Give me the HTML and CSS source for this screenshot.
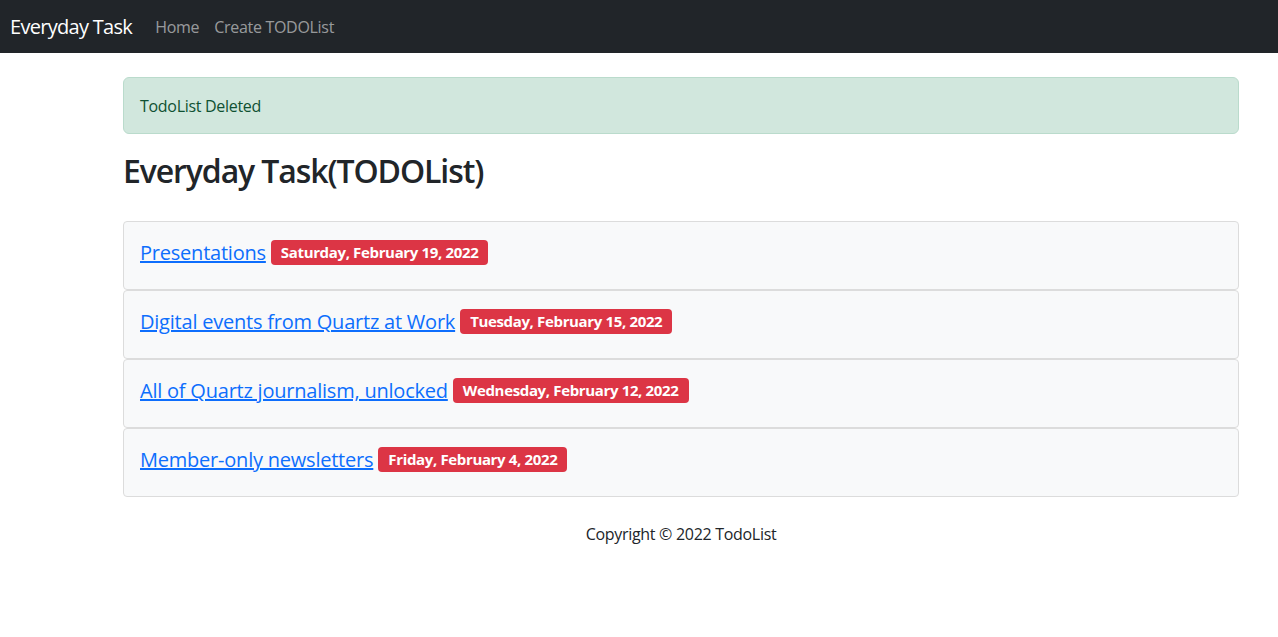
FILE: index.html
```html
<!DOCTYPE html>
<html lang="en">
<head>
<meta charset="utf-8">
<title>Everyday Task</title>
<link rel="stylesheet" href="styles.css">
</head>
<body>
<nav class="navbar">
  <a class="brand" href="#">Everyday Task</a>
  <ul class="nav-links">
    <li><a href="#">Home</a></li>
    <li><a href="#">Create TODOList</a></li>
  </ul>
</nav>
<main class="container">
  <div class="alert">TodoList Deleted</div>
  <h2 class="title">Everyday Task(TODOList)</h2>
  <ul class="todo-list">
    <li class="todo-item"><a href="#">Presentations</a> <span class="badge">Saturday, February 19, 2022</span></li>
    <li class="todo-item"><a href="#">Digital events from Quartz at Work</a> <span class="badge">Tuesday, February 15, 2022</span></li>
    <li class="todo-item"><a href="#">All of Quartz journalism, unlocked</a> <span class="badge">Wednesday, February 12, 2022</span></li>
    <li class="todo-item"><a href="#">Member-only newsletters</a> <span class="badge">Friday, February 4, 2022</span></li>
  </ul>
  <footer class="footer">Copyright © 2022 TodoList</footer>
</main>
</body>
</html>
```
FILE: styles.css
```css
* { box-sizing: border-box; }
body {
  margin: 0;
  font-family: "Open Sans", "Noto Sans", sans-serif;
  font-size: 16px;
  line-height: 1.5;
  color: #212529;
  background: #fff;
  letter-spacing: -0.3px;
}
.navbar {
  display: flex;
  align-items: center;
  height: 53px;
  background: #212529;
  padding: 0 10px;
}
.brand {
  color: #fff;
  font-size: 20px;
  letter-spacing: -0.7px;
  text-decoration: none;
  margin-right: 23px;
}
.nav-links {
  display: flex;
  list-style: none;
  margin: 0;
  padding: 0;
  gap: 15px;
}
.nav-links a {
  color: rgba(255,255,255,.55);
  text-decoration: none;
  font-size: 16px;
}
.container {
  margin-left: 123px;
  width: 1116px;
}
.alert {
  margin-top: 24px;
  height: 57px;
  padding: 0 16px;
  display: flex;
  align-items: center;
  background: #d1e7dd;
  border: 1px solid #badbcc;
  border-radius: 6px;
  color: #0f5132;
}
.title {
  margin: 18px 0 0;
  font-size: 32px;
  font-weight: 600;
  letter-spacing: -1.1px;
  line-height: 1.2;
  height: 38px;
}
.todo-list {
  list-style: none;
  margin: 31px 0 0;
  padding: 0;
}
.todo-item {
  height: 69px;
  display: flex;
  align-items: flex-start;
  gap: 5px;
  padding: 16px 16px 0;
  background: #f8f9fa;
  border: 1px solid #dcdcdc;
  border-radius: 4px;
  font-size: 20px;
  line-height: 30px;
  letter-spacing: -0.22px;
}
.todo-item a {
  color: #0d6efd;
  text-decoration: underline;
}
.badge {
  display: inline-block;
  margin-top: 2px;
  background: #dc3545;
  color: #fff;
  font-size: 15px;
  font-weight: 700;
  line-height: 15px;
  letter-spacing: -0.35px;
  padding: 5px 10px;
  border-radius: 4px;
}
.footer {
  text-align: center;
  margin-top: 25px;
}
```
